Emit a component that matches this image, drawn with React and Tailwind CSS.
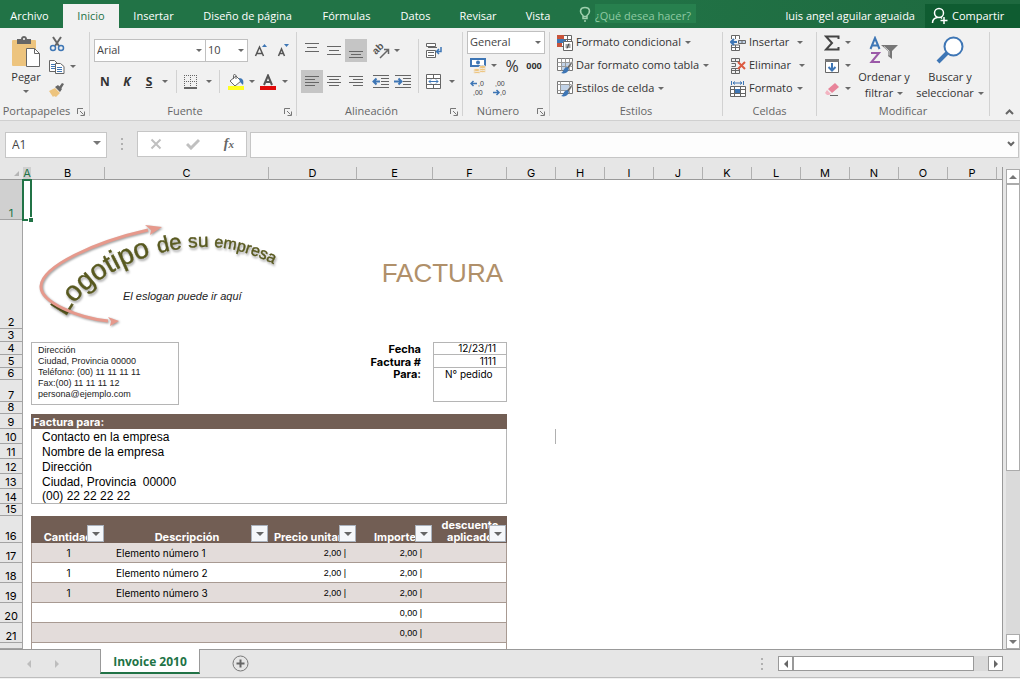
import React from 'react'
import clsx from 'clsx'

const TABS = [
	{ name: 'Archivo', width: 'w-[63px] pr-1' },
	{ name: 'Inicio', width: 'w-14', active: true },
	{ name: 'Insertar', width: 'w-[69px]' },
	{ name: 'Diseño de página', width: 'w-[119px]' },
	{ name: 'Fórmulas', width: 'w-[79px]' },
	{ name: 'Datos', width: 'w-[59px]' },
	{ name: 'Revisar', width: 'w-[66px]' },
	{ name: 'Vista', width: 'w-[54px]' },
]

const COLUMNS = [
	{ name: 'A', width: 'w-2' },
	{ name: 'B', width: 'w-[74px]' },
	{ name: 'C', width: 'w-[164px]' },
	{ name: 'D', width: 'w-[88px]' },
	{ name: 'E', width: 'w-[76px]' },
	{ name: 'F', width: 'w-[74px]' },
	...'GHIJKLMNOP'.split('').map((name) => ({ name, width: 'w-[49px]' })),
]

const CONTACT = [
	'Contacto en la empresa',
	'Nombre de la empresa',
	'Dirección',
	'Ciudad, Provincia  00000',
	'(00) 22 22 22 22',
]

const ITEMS = [
	{ row: 17, qty: '1', name: 'Elemento número 1', price: '2,00 |', total: '2,00 |' },
	{ row: 18, qty: '1', name: 'Elemento número 2', price: '2,00 |', total: '2,00 |' },
	{ row: 19, qty: '1', name: 'Elemento número 3', price: '2,00 |', total: '2,00 |' },
	{ row: 20, total: '0,00 |' },
	{ row: 21, total: '0,00 |' },
]

const HEADINGS = ['Cantidad', 'Descripción', 'Precio unitario', 'Importe', 'descuento aplicado']

const Svg = ({ w = 16, h = 16, children, className }) => (
	<svg
		width={w}
		height={h}
		viewBox={`0 0 ${w} ${h}`}
		fill="none"
		stroke="#666"
		className={clsx('shrink-0', className)}
		aria-hidden="true"
	>
		{children}
	</svg>
)

const Caret = ({ className }) => (
	<svg width="6" height="3" viewBox="0 0 6 3" className={clsx('shrink-0', className)} aria-hidden="true">
		<path d="M0 0h6L3 3z" fill="#6a6a6a" />
	</svg>
)

const Tool = ({ label, className = 'w-[22px]', active, children }) => (
	<button
		type="button"
		aria-label={label}
		className={clsx('flex h-[23px] shrink-0 items-center justify-center', className, active && 'bg-[#c5c5c5]')}
	>
		{children}
	</button>
)

const CaretTool = ({ label, className }) => (
	<Tool label={label} className={clsx('w-[10px]', className)}>
		<Caret />
	</Tool>
)

const Combo = ({ label, value, className }) => (
	<div className={clsx('relative h-[23px] shrink-0', className)}>
		<select
			aria-label={label}
			defaultValue={value}
			className="block h-full w-full appearance-none border border-[#c0c0c0] bg-white pl-[2px] text-[11px] text-[#444]"
		>
			<option>{value}</option>
		</select>
		<Caret className="pointer-events-none absolute top-[10px] right-1" />
	</div>
)

const Divider = ({ className }) => <span className={clsx('w-px shrink-0 bg-[#d2d2d2]', className)} />

const Launcher = () => (
	<button type="button" aria-label="Más opciones" className="absolute right-1 bottom-1">
		<Svg w={8} h={8}>
			<path d="M.5 6V.5H6M3 3l3.5 3.5M7.5 3.5v4h-4" stroke="#777" />
		</Svg>
	</button>
)

const Group = ({ title, className, launcher, children }) => (
	<section className="flex shrink-0 py-1">
		<div className={clsx('relative flex h-[84px] flex-col', className)}>
			<div className="flex h-[73px] shrink-0">{children}</div>
			<h2 className="text-center text-[11px] leading-3 text-[#666]">{title}</h2>
			{launcher && (
				<div className="absolute right-0 -bottom-1">
					<Launcher />
				</div>
			)}
		</div>
		<Divider />
	</section>
)

const AlignIcon = ({ rows }) => (
	<Svg>
		{rows.map(([y, x1, x2]) => (
			<path key={y} d={`M${x1} ${y}.5H${x2}`} />
		))}
	</Svg>
)

const PasteIcon = () => (
	<Svg w={30} h={32}>
		<rect x="1" y="4" width="24" height="26" rx="1" fill="#edc47e" stroke="none" />
		<path d="M6 8V3h4c0-4 6-4 6 0h4v5z" fill="#666" stroke="none" />
		<circle cx="13" cy="3" r="1" fill="#fff" stroke="none" />
		<path d="M15.500 12.500h8l5 5v13h-13z" fill="#fff" />
		<path d="M23.500 12.500v5h5" />
	</Svg>
)

const ScissorsIcon = () => (
	<Svg>
		<path d="M4 1l6 9M12 1L6 10" strokeWidth="2" />
		<circle cx="4" cy="12" r="2.500" stroke="#3e76b5" strokeWidth="1.500" />
		<circle cx="12" cy="12" r="2.500" stroke="#3e76b5" strokeWidth="1.500" />
	</Svg>
)

const CopyIcon = () => (
	<Svg>
		<path d="M.5 1.500h5l3 3v8h-8z" fill="#fff" />
		<path d="M2 5.500h4M2 7.500h4M2 9.500h4" stroke="#3e76b5" />
		<path d="M6.500 4.500h5l3.500 3v7H6.500z" fill="#fff" />
		<path d="M8 8.500h5M8 10.500h5M8 12.500h5" stroke="#3e76b5" />
	</Svg>
)

const BrushIcon = () => (
	<Svg>
		<path d="M0 9l6-3 5 5-4 4-2-1-1 1z" fill="#edc47e" stroke="none" />
		<path d="M6 5l3-2 4 4-2 3zM10 5l3-4 2 1-3 5z" fill="#666" stroke="none" />
	</Svg>
)

const SheetIcon = () => (
	<>
		<path d="M.5 .5h15v12H.5z" fill="#fff" stroke="#777" />
		<path d="M4.500 .5v12M8.500 .5v12M12.500 .5v12M.5 4.500h15M.5 8.500h15" stroke="#999" />
	</>
)

const PenIcon = () => (
	<>
		<path d="M15 3v3l-4 6-2-2z" fill="#666" stroke="#fff" strokeWidth=".5" />
		<path d="M10 9c2 1 2 2 1 4-1 2-4 3-7 2 3-1 2-5 6-6z" fill="#3e76b5" stroke="none" />
	</>
)

const ConditionalIcon = () => (
	<Svg>
		<path d="M.5 .5h14v11H.5z" fill="#fff" />
		<path d="M0 0h7v4H0zM0 8h5v4H0z" fill="#c8533a" stroke="none" />
		<path d="M0 4h9v4H0z" fill="#3e76b5" stroke="none" />
		<path d="M10.500 0v6M7 4.500h8" />
		<path d="M6.500 6.500h9v9h-9z" fill="#fff" />
		<path d="M8.500 10h5M8.500 12h5M12 8.500l-2 5" stroke="#444" />
	</Svg>
)

const TableStyleIcon = () => (
	<Svg>
		<SheetIcon />
		<path d="M5 5h7v7H5z" fill="#c2d3e8" stroke="none" />
		<path d="M8.500 5v6M5 8.500h5" stroke="#999" />
		<PenIcon />
	</Svg>
)

const CellStyleIcon = () => (
	<Svg>
		<path d="M.5 .5h15v12H.5z" fill="#fff" stroke="#777" />
		<path d="M3.500 .5v12M.5 3.500h15M12.500 .5v12M.5 9.500h12" stroke="#999" />
		<path d="M4 4h8v5H4z" fill="#c2d3e8" stroke="none" />
		<PenIcon />
	</Svg>
)

const InsertIcon = () => (
	<Svg>
		<path d="M1.500 4V.5h8V4M5.500 .5V4M1.500 10v5.500h8V10zM5.500 10v5M1.500 12.500h8" fill="#fff" />
		<path d="M8.500 5.500h7v3h-7z" fill="#c2d3e8" />
		<path d="M12 5v4" />
		<path d="M7 7H1M4 4L1 7l3 3" stroke="#3e76b5" strokeWidth="2" />
	</Svg>
)

const DeleteIcon = () => (
	<Svg>
		<path d="M1.500 4V.5h8V4M5.500 .5V4M1.500 3.500h8M1.500 5.500h4v3h-4M1.500 15.500v-5h8v5zM5.500 10v5M1.500 12.500h8" />
		<path d="M8 4l7 7M15 4l-7 7" stroke="#dc5b41" strokeWidth="2" />
	</Svg>
)

const FormatIcon = () => (
	<Svg>
		<path d="M1.500 0v4M13.500 0v4M3 2h9M5 .5L3 2l2 1.500M10 .5L12 2l-2 1.500" stroke="#3e76b5" />
		<path d="M.5 5.500h15v10H.5zM4.500 5v10M10.500 5v10M.5 8.500h15M.5 12.500h15" fill="#fff" />
		<path d="M5 8h5v4H5z" fill="#3e76b5" stroke="none" />
	</Svg>
)

const SortIcon = () => (
	<Svg w={30} h={28}>
		<path d="M1.500 13L6 2l4.500 11M3 9.500h6" stroke="#3e76b5" strokeWidth="2" />
		<path d="M2 17h8L2.500 26H11" stroke="#9b59a8" strokeWidth="2" />
		<path d="M12 9h17l-6 6v8l-4-3v-5z" fill="#777" stroke="none" />
		<path d="M15 10.500l5 4.500v4.500" stroke="#ddd" />
	</Svg>
)

const SearchIcon = () => (
	<Svg w={28} h={28}>
		<circle cx="17.500" cy="10.500" r="9" fill="#fff" stroke="#3e76b5" strokeWidth="2" />
		<path d="M11 17l-9 9" stroke="#3e76b5" strokeWidth="4" />
	</Svg>
)

const IndentIcon = ({ out }) => (
	<Svg w={18}>
		<path d="M1 1.500h16M9 4.500h8M9 7.500h8M9 10.500h8M1 13.500h16" />
		<path d={out ? 'M8 7.500H2M4.500 4.500l-3 3 3 3' : 'M0 7.500h7M4.500 4.500l3 3-3 3'} stroke="#3e76b5" strokeWidth="2" />
	</Svg>
)

const DecimalIcon = ({ more }) => (
	<Svg w={16} h={19}>
		<g fill="#444" stroke="none" fontSize="7" fontFamily="Liberation Sans, sans-serif">
			<text x={more ? 8 : 3} y="7">
				{more ? ',0' : ',00'}
			</text>
			<text x={more ? 3 : 8} y="16">
				{more ? ',00' : ',0'}
			</text>
		</g>
		<path
			d={more ? 'M7 4.500H1M3.500 2L1 4.500 3.500 7' : 'M1 13.500h6M4.500 11L7 13.500 4.500 16'}
			stroke="#3e76b5"
			strokeWidth="1.500"
		/>
	</Svg>
)

const MoneyIcon = () => (
	<Svg w={18}>
		<path d="M2 1h14v7H2z" fill="#fff" stroke="#3e76b5" strokeWidth="2" />
		<circle cx="9" cy="4.500" r="2" fill="#3e76b5" stroke="none" />
		<g fill="#edc47e" stroke="#f1f1f1" strokeWidth=".8">
			<ellipse cx="8" cy="14" rx="3.500" ry="1.600" />
			<ellipse cx="8" cy="12" rx="3.500" ry="1.600" />
			<ellipse cx="13.500" cy="13" rx="3.500" ry="1.600" />
			<ellipse cx="13.500" cy="11" rx="3.500" ry="1.600" />
			<ellipse cx="13.500" cy="9" rx="3.500" ry="1.600" />
		</g>
	</Svg>
)

const TitleBar = () => (
	<header className="flex h-7 shrink-0 overflow-hidden bg-linear-to-r from-[#217346] from-60% to-[#1e693f] pt-1 text-[11px] text-white">
		<nav className="flex shrink-0">
			{TABS.map((tab) => (
				<button
					key={tab.name}
					type="button"
					className={clsx('h-6 shrink-0 whitespace-nowrap', tab.width, tab.active && 'bg-[#f1f1f1] text-[#217346]')}
				>
					{tab.name}
				</button>
			))}
		</nav>
		<div className="ml-[13px] flex h-5 shrink-0 items-start">
			<Svg w={14} h={20} className="mr-[3px]">
				<path
					d="M5 14.500v-3C1 8 2 3.500 7 3.500s6 4.500 2 8v3zM5 12.500h4M6 17h2"
					stroke="#9fd0ae"
					strokeWidth="1.500"
				/>
			</Svg>
			<input
				type="text"
				aria-label="¿Qué desea hacer?"
				placeholder="¿Qué desea hacer?"
				className="h-[19px] w-[101px] bg-[#27804e] pt-1 text-[11px] placeholder:text-[#8fcaa3]"
			/>
		</div>
		<div className="ml-auto flex shrink-0">
			<span className="pr-[10px] leading-6">luis angel aguilar aguaida</span>
			<button type="button" className="flex w-[95px] items-center bg-[#0f5c31] pl-[6px]">
				<Svg w={18} h={18} className="mr-[3px]">
					<circle cx="8" cy="6" r="4.500" stroke="#fff" strokeWidth="1.500" />
					<path d="M1.500 16c0-3 2-5 5-5.500M10 10.500l1 1M13 10v7M9.500 13.500h7" stroke="#fff" strokeWidth="1.500" />
				</Svg>
				Compartir
			</button>
		</div>
	</header>
)

const LabeledTool = ({ icon, label, gap = 'ml-1' }) => (
	<button type="button" className="flex h-[23px] items-center whitespace-nowrap">
		{icon}
		<span className="ml-[3px]">{label}</span>
		<Caret className={gap} />
	</button>
)

const Ribbon = () => (
	<div className="flex shrink-0 overflow-hidden border-b border-[#d0d0d0] bg-[#f1f1f1] text-[11px] text-[#333]">
		<Group title="Portapapeles" className="w-[89px] pr-4" launcher>
			<button type="button" className="ml-[11px] flex w-8 flex-col items-center pt-1">
				<PasteIcon />
				<span className="mt-px leading-4">Pegar</span>
				<Caret className="mt-[5px]" />
			</button>
			<div className="ml-[5px] flex flex-col">
				<Tool label="Cortar">
					<ScissorsIcon />
				</Tool>
				<div className="flex">
					<Tool label="Copiar">
						<CopyIcon />
					</Tool>
					<CaretTool label="Opciones de copia" />
				</div>
				<Tool label="Copiar formato">
					<BrushIcon />
				</Tool>
			</div>
		</Group>

		<Group title="Fuente" className="w-[206px] pr-4" launcher>
			<div className="flex flex-col gap-2 pt-[7px] pl-1">
				<div className="flex">
					<Combo label="Fuente" value="Arial" className="w-[112px]" />
					<Combo label="Tamaño" value="10" className="-ml-px w-[43px]" />
					<Tool label="Aumentar tamaño" className="ml-[2px] w-[22px]">
						<Svg>
							<path d="M2.500 13L6.500 4l4 9M4 10.500h5" stroke="#555" strokeWidth="1.500" />
							<path d="M9 4l2.500-3L14 4z" fill="#3e76b5" stroke="none" />
						</Svg>
					</Tool>
					<Tool label="Disminuir tamaño">
						<Svg>
							<path d="M3.500 13l3-7 3 7M4.500 10.500h4" stroke="#555" strokeWidth="1.500" />
							<path d="M9 1l2.500 3L14 1z" fill="#3e76b5" stroke="none" />
						</Svg>
					</Tool>
				</div>
				<div className="flex">
					<Tool label="Negrita">
						<b className="text-xs">N</b>
					</Tool>
					<Tool label="Cursiva">
						<b className="text-xs italic">K</b>
					</Tool>
					<Tool label="Subrayado">
						<b className="text-xs underline">S</b>
					</Tool>
					<CaretTool label="Opciones de subrayado" />
					<Divider className="mr-[5px] ml-[6px]" />
					<Tool label="Bordes" className="w-[18px]">
						<Svg w={14} h={14}>
							<path d="M.5 0v13M6.500 0v13M12.500 0v13M0 .5h13M0 6.500h13" strokeDasharray="1 1" />
							<path d="M0 13h13" strokeWidth="2" />
						</Svg>
					</Tool>
					<CaretTool label="Opciones de bordes" className="ml-1" />
					<Divider className="mr-[5px] ml-[5px]" />
					<Tool label="Color de relleno">
						<Svg w={18} h={16}>
							<path d="M3 7l6-5 5 5-6 5z" fill="#fff" />
							<path d="M6.500 5V1.500c0-2 3-1 2.500 1V5" />
							<path d="M12 4c4 0 5 3 4 7l-3-3z" fill="#3e76b5" stroke="none" />
							<path d="M1 12h16v4H1z" fill="#ff2" stroke="none" />
						</Svg>
					</Tool>
					<CaretTool label="Opciones de relleno" />
					<Tool label="Color de fuente">
						<Svg w={16} h={16}>
							<path d="M4 11L8 1.500 12 11M5.500 8h5" stroke="#555" strokeWidth="2" />
							<path d="M0 12h16v4H0z" fill="#e00b0b" stroke="none" />
						</Svg>
					</Tool>
					<CaretTool label="Opciones de color de fuente" className="ml-px" />
				</div>
			</div>
		</Group>

		<Group title="Alineación" className="w-[165px] pr-4" launcher>
			<div className="flex flex-col gap-2 pt-[7px] pl-1">
				<div className="flex">
					<Tool label="Alinear arriba">
						<AlignIcon rows={[[0, 1, 15], [4, 3, 13], [8, 1, 15]]} />
					</Tool>
					<Tool label="Alinear al medio">
						<AlignIcon rows={[[3, 1, 15], [7, 3, 13], [11, 1, 15]]} />
					</Tool>
					<Tool label="Alinear abajo" active>
						<AlignIcon rows={[[8, 1, 15], [11, 3, 13], [14, 1, 15]]} />
					</Tool>
					<Tool label="Orientación" className="ml-[3px] w-[22px]">
						<Svg w={18} className="overflow-visible">
							<text
								x="4"
								y="12"
								fill="#555"
								stroke="none"
								fontSize="10"
								fontWeight="bold"
								fontFamily="Liberation Sans, sans-serif"
								transform="rotate(-45 4 12)"
							>
								ab
							</text>
							<path d="M8 15l8-8M12 6.500h4.500V11" strokeWidth="1.500" />
						</Svg>
					</Tool>
					<CaretTool label="Opciones de orientación" />
				</div>
				<div className="flex">
					<Tool label="Alinear a la izquierda" active>
						<AlignIcon rows={[[2, 1, 15], [5, 1, 11], [8, 1, 15], [11, 1, 11]]} />
					</Tool>
					<Tool label="Centrar">
						<AlignIcon rows={[[2, 1, 15], [5, 3, 13], [8, 1, 15], [11, 3, 13]]} />
					</Tool>
					<Tool label="Alinear a la derecha">
						<AlignIcon rows={[[2, 1, 15], [5, 5, 15], [8, 1, 15], [11, 5, 15]]} />
					</Tool>
					<Tool label="Disminuir sangría" className="ml-[3px] w-[22px]">
						<IndentIcon out />
					</Tool>
					<Tool label="Aumentar sangría">
						<IndentIcon />
					</Tool>
				</div>
			</div>
			<Divider className="mt-[7px] mr-1 ml-1 h-[54px]" />
			<div className="flex flex-col gap-2 pt-[7px]">
				<Tool label="Ajustar texto">
					<Svg>
						<path d="M.5 .5h9v3h-9zM.5 7.500h9v7h-9z" fill="#fff" />
						<path d="M2 4.500h9M2 9.500h6M2 12.500h6" />
						<path d="M15 4v4.500h-4M13 6l-2.500 2.500L13 11" stroke="#3e76b5" strokeWidth="1.500" />
					</Svg>
				</Tool>
				<div className="flex">
					<Tool label="Combinar y centrar">
						<Svg>
							<path d="M.5 .5h14v14H.5zM.5 4.500h14M.5 10.500h14M7.500 0v4M7.500 11v4" fill="#fff" />
							<path d="M3 7.500h9M5 5.500l-2 2 2 2M10 5.500l2 2-2 2" stroke="#3e76b5" />
						</Svg>
					</Tool>
					<CaretTool label="Opciones de combinar" className="ml-[2px]" />
				</div>
			</div>
		</Group>

		<Group title="Número" className="w-[86px] pr-4" launcher>
			<div className="-mt-px flex flex-col pl-1">
				<Combo label="Formato de número" value="General" className="w-[78px]" />
				<div className="flex">
					<Tool label="Formato de contabilidad">
						<MoneyIcon />
					</Tool>
					<CaretTool label="Opciones de contabilidad" />
					<Tool label="Porcentaje" className="ml-[2px] w-[22px]">
						<span className="text-base">%</span>
					</Tool>
					<Tool label="Millares">
						<b className="text-[9px]">000</b>
					</Tool>
				</div>
				<div className="flex">
					<Tool label="Aumentar decimales">
						<DecimalIcon more />
					</Tool>
					<Tool label="Disminuir decimales">
						<DecimalIcon />
					</Tool>
				</div>
			</div>
		</Group>

		<Group title="Estilos" className="w-[172px]">
			<div className="-mt-px flex flex-col pl-[7px]">
				<LabeledTool icon={<ConditionalIcon />} label="Formato condicional" />
				<LabeledTool icon={<TableStyleIcon />} label="Dar formato como tabla" />
				<LabeledTool icon={<CellStyleIcon />} label="Estilos de celda" />
			</div>
		</Group>

		<Group title="Celdas" className="w-[93px]">
			<div className="-mt-px flex flex-col pl-[7px]">
				<LabeledTool icon={<InsertIcon />} label="Insertar" gap="ml-2" />
				<LabeledTool icon={<DeleteIcon />} label="Eliminar" gap="ml-2" />
				<LabeledTool icon={<FormatIcon />} label="Formato" />
			</div>
		</Group>

		<Group title="Modificar" className="w-[172px]">
			<div className="-mt-px flex flex-col pl-1">
				<div className="flex">
					<Tool label="Autosuma">
						<Svg>
							<path d="M14.500 4V1.500H2L8 8l-6 6.500h12.500V12" stroke="#444" strokeWidth="2" />
						</Svg>
					</Tool>
					<CaretTool label="Opciones de autosuma" />
				</div>
				<div className="flex">
					<Tool label="Rellenar">
						<Svg>
							<path d="M1.500 1.500h13v13h-13z" fill="#fff" />
							<path d="M1 1h14v3H1z" fill="#777" stroke="none" />
							<path d="M8 5v7M4.500 9L8 12.500 11.500 9" stroke="#3e76b5" strokeWidth="2" />
						</Svg>
					</Tool>
					<CaretTool label="Opciones de relleno de celdas" />
				</div>
				<div className="flex">
					<Tool label="Borrar">
						<Svg>
							<path d="M4 8l7-6 4 4-7 6z" fill="#e8849a" stroke="none" />
							<path d="M3 9l4 4-2 1H3l-2-2z" fill="#f3b4c1" stroke="none" />
							<path d="M6 14.500h8" />
						</Svg>
					</Tool>
					<CaretTool label="Opciones de borrado" />
				</div>
			</div>
			<button type="button" className="ml-[2px] flex w-[58px] flex-col items-center pt-1">
				<SortIcon />
				<span className="mt-[5px] leading-4 whitespace-nowrap">Ordenar y</span>
				<span className="flex items-center leading-4">
					filtrar
					<Caret className="ml-1" />
				</span>
			</button>
			<button type="button" className="flex w-[74px] flex-col items-center pt-1">
				<SearchIcon />
				<span className="mt-[5px] leading-4 whitespace-nowrap">Buscar y</span>
				<span className="flex items-center leading-4">
					seleccionar
					<Caret className="ml-1" />
				</span>
			</button>
		</Group>

		<button type="button" aria-label="Contraer la cinta" className="mt-auto mr-[6px] mb-[5px] ml-auto">
			<Svg w={9} h={6}>
				<path d="M1 5l3.500-3.500L8 5" strokeWidth="2" />
			</Svg>
		</button>
	</div>
)

const Dots = () => (
	<span className="flex w-[2px] flex-col gap-[3px]">
		<i className="h-[2px] bg-[#b0b0b0]" />
		<i className="h-[2px] bg-[#b0b0b0]" />
		<i className="h-[2px] bg-[#b0b0b0]" />
	</span>
)

const FormulaBar = () => (
	<div className="flex h-[46px] shrink-0 items-start pt-[10px] pr-px pl-[5px] text-[#444]">
		<div className="relative h-[26px] w-[102px]">
			<input
				type="text"
				aria-label="Cuadro de nombres"
				defaultValue="A1"
				className="h-full w-full border border-[#c6c6c6] bg-white pl-[6px] text-xs"
			/>
			<svg width="8" height="4" viewBox="0 0 8 4" className="absolute top-[10px] right-[6px]">
				<path d="M0 0h8L4 4z" fill="#777" />
			</svg>
		</div>
		<div className="flex h-[26px] w-[30px] items-center justify-center">
			<Dots />
		</div>
		<div className="flex h-[26px] w-[110px] items-center justify-around border border-[#c6c6c6] bg-white">
			<button type="button" aria-label="Cancelar">
				<Svg w={12} h={12}>
					<path d="M1.500 1.500l9 9M10.500 1.500l-9 9" stroke="#c0c0c0" strokeWidth="2" />
				</Svg>
			</button>
			<button type="button" aria-label="Introducir">
				<Svg w={14} h={12}>
					<path d="M1 6l4 4 8-8" stroke="#c0c0c0" strokeWidth="3" />
				</Svg>
			</button>
			<button type="button" className="font-['Liberation_Serif',serif] text-sm leading-4 font-bold text-[#666] italic">
				f<span className="text-[11px]">x</span>
			</button>
		</div>
		<div className="relative ml-[3px] h-[26px] flex-1">
			<input
				type="text"
				aria-label="Barra de fórmulas"
				className="h-full w-full border border-[#c6c6c6] bg-[#fdfdfd] px-2 text-xs"
			/>
			<Svg w={8} h={6} className="absolute top-[10px] right-1">
				<path d="M1 1l3 3 3-3" strokeWidth="2" />
			</Svg>
		</div>
	</div>
)

const RowHead = ({ n, height, selected }) => (
	<th
		scope="row"
		className={clsx(
			'border-r border-b border-[#a3a3a3] p-0 text-center align-bottom text-[11px] leading-[11px] font-normal',
			height,
			selected ? 'bg-[#d0d0d0] text-[#217346]' : 'bg-[#e6e6e6]'
		)}
	>
		{n}
	</th>
)

const CompanyLogo = () => (
	<div className="absolute top-0 left-0 w-[250px]">
		<svg viewBox="31 220 250 115" width="250" height="115" className="block" role="img" aria-label="Logotipo de su empresa">
			<defs>
				<path id="logo-arc" d="M66 317C82 285 130 254 188 248C220 244 252 251 280 268" />
			</defs>
			<text
				fill="#58591f"
				stroke="#58591f"
				strokeWidth=".4"
				fontFamily="Liberation Sans, sans-serif"
				className="drop-shadow-[1px_2px_1px_rgba(0,0,0,0.35)]"
			>
				<textPath href="#logo-arc">
					<tspan fontSize="28">Logotipo </tspan>
					<tspan fontSize="22">de </tspan>
					<tspan fontSize="19">su </tspan>
					<tspan fontSize="16">empresa</tspan>
				</textPath>
			</text>
			<g className="drop-shadow-[1px_1px_1px_rgba(0,0,0,0.4)]">
				<path
					d="M148 230C95 242 42 266 41 286C40 302 78 318 108 321"
					fill="none"
					stroke="#e6998c"
					strokeWidth="3"
				/>
				<path d="M145 225l17 2-12 8 1-5zM108 317l11 4-9 5 1-5z" fill="#e6998c" />
			</g>
		</svg>
		<p className="absolute top-[68px] left-[92px] text-[11px] leading-4 whitespace-nowrap text-[#222] italic">
			El eslogan puede ir aquí
		</p>
	</div>
)

const AddressBox = () => (
	<address className="absolute top-0 left-0 h-[63px] w-[148px] border border-[#b5b5b5] bg-white pt-[2px] pl-[6px] text-left text-[9px] leading-[11px] whitespace-nowrap text-[#222] not-italic">
		Dirección
		<br />
		Ciudad, Provincia 00000
		<br />
		Teléfono: (00) 11 11 11 11
		<br />
		Fax:(00) 11 11 11 12
		<br />
		persona@ejemplo.com
	</address>
)

const FilterHeading = ({ label }) => (
	<th scope="col" className="relative overflow-hidden bg-[#725e54] p-0 px-1 align-bottom leading-3 font-bold text-white">
		<span className={clsx('block', label.startsWith('desc') ? 'px-1' : 'whitespace-nowrap')}>{label}</span>
		<button
			type="button"
			aria-label={`Filtrar ${label}`}
			className="absolute right-px bottom-px flex h-[17px] w-[17px] items-center justify-center border border-[#aab2bd] bg-[#f5f7fa]"
		>
			<svg width="8" height="4" viewBox="0 0 8 4">
				<path d="M0 0h8L4 4z" fill="#666" />
			</svg>
		</button>
	</th>
)

const Sheet = () => (
	<div className="min-w-0 flex-1 overflow-hidden border-r border-[#999]">
		<table className="h-full w-full table-fixed border-separate border-spacing-0 bg-white font-['Inter','Liberation_Sans',sans-serif] text-[11px] leading-3 text-black">
			<colgroup>
				<col className="w-[23px]" />
				{COLUMNS.map((col) => (
					<col key={col.name} className={col.width} />
				))}
				<col />
			</colgroup>
			<thead>
				<tr className="bg-[#e6e6e6]">
					<td className="h-[13px] border-b border-[#999] p-0">
						<svg width="5" height="5" viewBox="0 0 5 5" className="mr-1 ml-auto">
							<path d="M5 0v5H0z" fill="#b5b5b5" />
						</svg>
					</td>
					{COLUMNS.map((col) => (
						<th
							key={col.name}
							scope="col"
							className={clsx(
								'border-b border-[#999] p-0 font-normal',
								col.name === 'A' ? 'bg-[#cfcfcf] text-[#217346]' : 'border-r border-r-[#b0b0b0]'
							)}
						>
							{col.name}
						</th>
					))}
					<td className="border-b border-[#999] p-0" />
				</tr>
			</thead>
			<tbody>
				<tr>
					<RowHead n={1} height="h-10" selected />
					<td className="relative p-0">
						<span className="absolute -top-px -right-px -bottom-px -left-px border-2 border-[#217346]" />
						<span className="absolute -right-[2px] -bottom-[2px] h-[5px] w-[5px] border-t border-l border-white bg-[#217346]" />
					</td>
				</tr>
				<tr>
					<RowHead n={2} height="h-[109px]" />
					<td className="p-0" />
					<td colSpan={2} className="relative p-0 font-['Liberation_Sans',sans-serif]">
						<CompanyLogo />
					</td>
					<td colSpan={3} className="p-0 pr-1 pb-1 text-right align-middle font-['Liberation_Sans',sans-serif] text-[26px] leading-8 text-[#b0906a]">
						FACTURA
					</td>
				</tr>
				<tr>
					<RowHead n={3} height="h-[13px]" />
				</tr>
				<tr>
					<RowHead n={4} height="h-[13px]" />
					<td className="p-0" />
					<td colSpan={2} className="relative p-0 font-['Liberation_Sans',sans-serif]">
						<AddressBox />
					</td>
					<td className="p-0" />
					<th scope="row" className="p-0 pr-3 text-right">Fecha</th>
					<td className="border border-[#b5b5b5] p-0 pr-[10px] text-right text-[10px] leading-[11px]">12/23/11</td>
				</tr>
				<tr>
					<RowHead n={5} height="h-[13px]" />
					<td colSpan={4} className="p-0" />
					<th scope="row" className="p-0 pr-3 text-right whitespace-nowrap">Factura #</th>
					<td className="border-x border-b border-[#b5b5b5] p-0 pr-[10px] text-right text-[10px]">1111</td>
				</tr>
				<tr>
					<RowHead n={6} height="h-3" />
					<td colSpan={4} className="p-0" />
					<th scope="row" className="p-0 pr-3 text-right">Para:</th>
					<td rowSpan={2} className="border-x border-b border-[#b5b5b5] p-0 pl-[11px] align-top text-[10px]">
						N° pedido
					</td>
				</tr>
				<tr>
					<RowHead n={7} height="h-[22px]" />
				</tr>
				<tr>
					<RowHead n={8} height="h-3" />
				</tr>
				<tr>
					<RowHead n={9} height="h-[15px]" />
					<td className="p-0" />
					<th scope="colgroup" colSpan={5} className="bg-[#725e54] p-0 pl-[2px] text-left text-white">
						Factura para:
					</th>
				</tr>
				{CONTACT.map((line, i) => (
					<tr key={line}>
						<RowHead n={10 + i} height="h-[15px]" />
						<td className="p-0" />
						<td
							colSpan={5}
							className={clsx(
								"border-x border-[#b5b5b5] p-0 pl-[10px] font-['Liberation_Sans',sans-serif] text-xs leading-[14px] whitespace-pre",
								i === CONTACT.length - 1 && 'border-b'
							)}
						>
							{line}
						</td>
						{i === 0 && <td className="border-r border-[#b0b0b0] p-0" />}
					</tr>
				))}
				<tr>
					<RowHead n={15} height="h-3" />
				</tr>
				<tr>
					<RowHead n={16} height="h-[27px]" />
					<td className="p-0" />
					{HEADINGS.map((label) => (
						<FilterHeading key={label} label={label} />
					))}
				</tr>
				{ITEMS.map((item) => {
					const cell = clsx('border-b border-[#a89a92] p-0', item.row % 2 && 'bg-[#e3dcda]')
					const money = clsx(cell, "pr-[11px] text-right font-['Liberation_Sans',sans-serif] text-[9px]")
					return (
						<tr key={item.row}>
							<RowHead n={item.row} height="h-5" />
							<td className="p-0" />
							<td className={clsx(cell, 'border-l text-center text-[10px]')}>{item.qty}</td>
							<td className={clsx(cell, 'pl-[11px] text-[10px]')}>{item.name}</td>
							<td className={money}>{item.price}</td>
							<td className={money}>{item.total}</td>
							<td className={clsx(cell, 'border-r')} />
						</tr>
					)
				})}
				<tr>
					<RowHead n="" height="h-auto" />
					<td className="p-0" />
					<td colSpan={5} className="border-x border-[#a89a92] p-0" />
				</tr>
			</tbody>
		</table>
	</div>
)

const VerticalScroll = () => (
	<div className="mt-[2px] ml-[3px] flex w-[14px] shrink-0 flex-col bg-[#dadada]">
		<button type="button" aria-label="Subir" className="flex h-[15px] items-center justify-center border border-[#ababab] bg-white">
			<svg width="8" height="4" viewBox="0 0 8 4">
				<path d="M0 4h8L4 0z" fill="#777" />
			</svg>
		</button>
		<div className="h-[287px] border border-[#ababab] bg-white" />
		<button type="button" aria-label="Bajar" className="mt-auto flex h-[15px] items-center justify-center border border-[#ababab] bg-white">
			<svg width="8" height="4" viewBox="0 0 8 4">
				<path d="M0 0h8L4 4z" fill="#777" />
			</svg>
		</button>
	</div>
)

const SheetTabs = () => (
	<footer className="flex h-7 shrink-0 border-t border-[#999] bg-[#e6e6e6]">
		<div className="flex w-[100px] items-center gap-6 pl-[27px]">
			<button type="button" aria-label="Hoja anterior">
				<svg width="4" height="8" viewBox="0 0 4 8">
					<path d="M4 0v8L0 4z" fill="#bdbdbd" />
				</svg>
			</button>
			<button type="button" aria-label="Hoja siguiente">
				<svg width="4" height="8" viewBox="0 0 4 8">
					<path d="M0 0v8l4-4z" fill="#bdbdbd" />
				</svg>
			</button>
		</div>
		<button
			type="button"
			className="-mt-px h-[25px] w-[100px] border-x border-b-2 border-x-[#999] border-b-[#217346] bg-white pt-[3px] text-xs font-bold text-[#217346]"
		>
			Invoice 2010
		</button>
		<button type="button" aria-label="Hoja nueva" className="ml-8">
			<Svg w={17} h={17}>
				<circle cx="8.500" cy="8.500" r="7.500" stroke="#777" />
				<path d="M4.500 8.500h8M8.500 4.500v8" strokeWidth="2" />
			</Svg>
		</button>
		<div className="mr-[17px] ml-auto flex items-center">
			<Dots />
			<button type="button" aria-label="Izquierda" className="ml-[15px] flex h-[15px] w-[15px] items-center justify-center border border-[#999] bg-white">
				<svg width="4" height="8" viewBox="0 0 4 8">
					<path d="M4 0v8L0 4z" fill="#666" />
				</svg>
			</button>
			<div className="h-[15px] w-[195px] bg-[#dadada]">
				<div className="h-full w-[181px] border border-[#999] bg-white" />
			</div>
			<button type="button" aria-label="Derecha" className="flex h-[15px] w-[15px] items-center justify-center border border-[#999] bg-white">
				<svg width="4" height="8" viewBox="0 0 4 8">
					<path d="M0 0v8l4-4z" fill="#666" />
				</svg>
			</button>
		</div>
	</footer>
)

const App = () => (
	<div className="flex h-screen flex-col overflow-hidden bg-[#e6e6e6] font-['Open_Sans','Noto_Sans',sans-serif]">
		<TitleBar />
		<Ribbon />
		<FormulaBar />
		<main className="flex min-h-0 flex-1">
			<Sheet />
			<VerticalScroll />
		</main>
		<SheetTabs />
		<div className="h-[2px] shrink-0 border-t border-[#bdbdbd] bg-[#f1f1f1]" />
	</div>
)

export default App
